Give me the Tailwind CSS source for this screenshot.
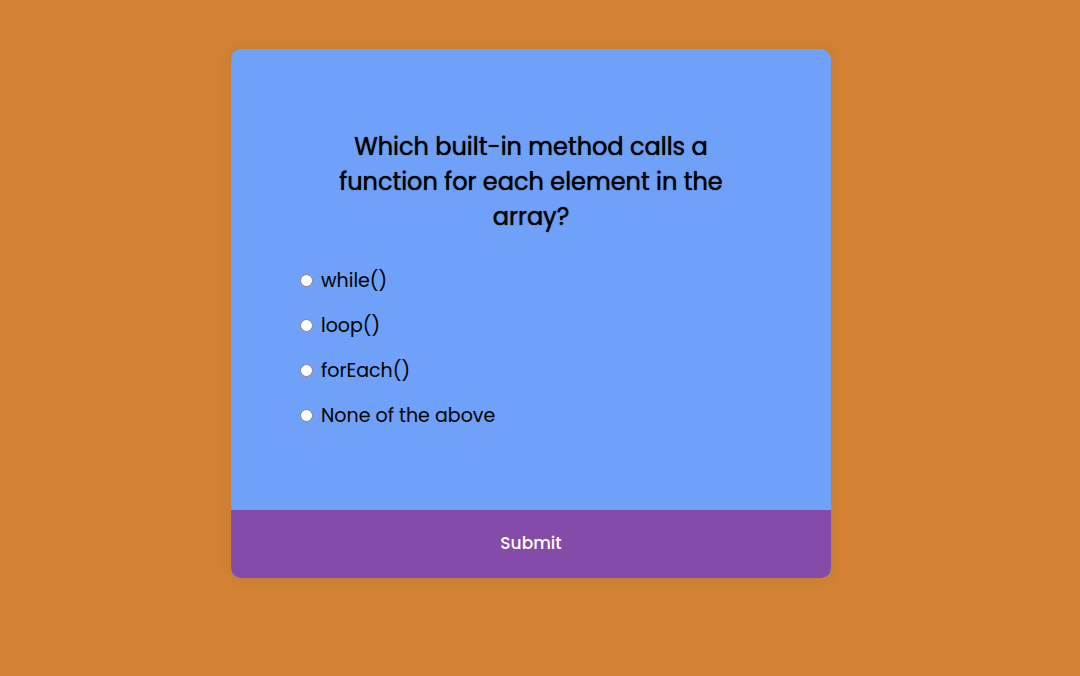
<!DOCTYPE html>
<html lang="en">
<head>
<meta charset="utf-8">
<meta name="viewport" content="width=device-width, initial-scale=1">
<title>Quiz</title>
<script src="https://cdn.jsdelivr.net/npm/@tailwindcss/browser@4"></script>
</head>
<body class="min-h-screen bg-[#d28232] pr-[18px] pb-[49px] flex items-center justify-center font-[Poppins,Inter,'Open_Sans',sans-serif] text-black">
<form class="w-full max-w-[600px] overflow-hidden rounded-[10px] bg-[#6ea1f7] shadow-[0_0_10px_2px_rgba(100,100,100,0.1)]">
<fieldset aria-labelledby="question" class="px-16 pt-20 pb-[72px]">
<h2 id="question" class="px-4 text-center text-2xl leading-[35px] font-normal text-shadow-[0_0_1px_#000]">Which built-in method calls a<br>function for each element in the<br>array?</h2>
<div class="mt-6 flex flex-col text-[19px] leading-[30px]">
<label class="flex h-[45px] items-center gap-2 pl-[5px]"><input type="radio" name="answer" value="a" class="size-[13px]">while()</label>
<label class="flex h-[45px] items-center gap-2 pl-[5px]"><input type="radio" name="answer" value="b" class="size-[13px]">loop()</label>
<label class="flex h-[45px] items-center gap-2 pl-[5px]"><input type="radio" name="answer" value="c" class="size-[13px]">forEach()</label>
<label class="flex h-[45px] items-center gap-2 pl-[5px]"><input type="radio" name="answer" value="d" class="size-[13px]">None of the above</label>
</div>
</fieldset>
<button type="button" class="block h-[68px] w-full bg-[#854ba8] text-[17px] font-medium text-white">Submit</button>
</form>
</body>
</html>
